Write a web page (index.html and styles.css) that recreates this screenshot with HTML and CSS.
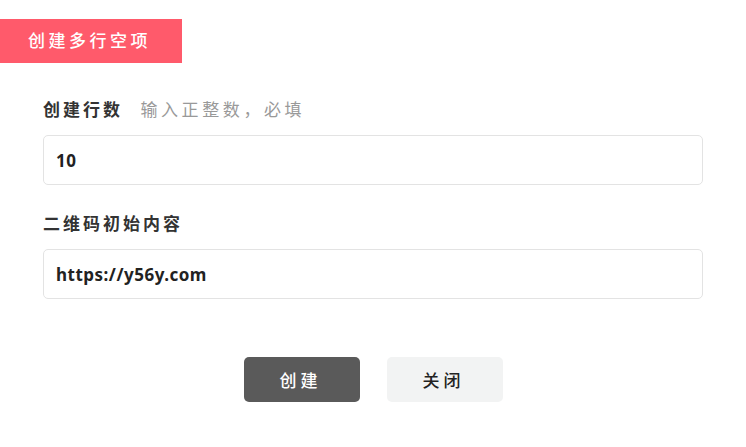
FILE: index.html
```html
<!DOCTYPE html>
<html lang="zh-CN">
<head>
    <meta charset="UTF-8">
    <meta name="viewport" content="width=device-width, initial-scale=1.0">
    <title>创建多行空项</title>
    <link rel="stylesheet" href="styles.css">
</head>
<body>

    <div class="dialog">
        <div class="tab">创建多行空项</div>

        <div class="form">
            <div class="field">
                <label for="rows">创建行数 <span class="hint">输入正整数，必填</span></label>
                <input type="text" id="rows" value="10">
            </div>

            <div class="field">
                <label for="content">二维码初始内容</label>
                <input type="text" id="content" value="https://y56y.com">
            </div>
        </div>

        <div class="actions">
            <button class="btn primary">创建</button>
            <button class="btn">关闭</button>
        </div>
    </div>

</body>
</html>
```

FILE: styles.css
```css
body {
    margin: 0;
    background-color: #fff;
    font-family: "Noto Sans", "Noto Sans CJK SC", sans-serif;
    color: #333;
}
.dialog {
    width: 746px;
    padding-top: 19px;
}
.tab {
    display: inline-block;
    background-color: #ff5a6b;
    color: #fff;
    font-size: 17px;
    font-weight: 500;
    letter-spacing: 3.5px;
    line-height: 44px;
    height: 44px;
    padding: 0 31px 0 28px;
}
.form {
    padding: 0 43px;
    margin-top: 36px;
}
.field {
    margin-bottom: 28px;
}
.field label {
    display: block;
    font-size: 17px;
    font-weight: bold;
    letter-spacing: 3px;
    line-height: 22px;
    margin-bottom: 14px;
    color: #333;
}
.hint {
    font-weight: normal;
    color: #999;
    letter-spacing: 3.6px;
    margin-left: 10px;
}
.field input {
    display: block;
    box-sizing: border-box;
    width: 100%;
    height: 50px;
    border: 1px solid #e3e3e3;
    border-radius: 5px;
    padding: 0 12px;
    font-family: inherit;
    font-size: 17px;
    font-weight: bold;
    letter-spacing: 0.5px;
    color: #222;
    outline: none;
}
.actions {
    display: flex;
    justify-content: center;
    gap: 27px;
    margin-top: 58px;
}
.btn {
    width: 116px;
    height: 45px;
    border: none;
    border-radius: 5px;
    background-color: #f2f3f3;
    color: #222;
    font-family: inherit;
    font-size: 17px;
    font-weight: 500;
    letter-spacing: 4px;
    padding-left: 4px;
    cursor: pointer;
}
.btn.primary {
    background-color: #5a5a5a;
    color: #fff;
}
```
